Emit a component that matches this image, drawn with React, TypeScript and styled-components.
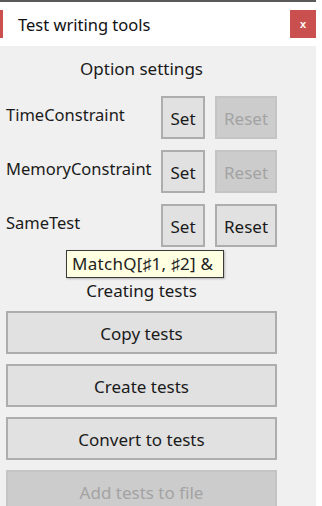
import React from 'react';
import styled, { createGlobalStyle } from 'styled-components';

const GlobalStyle = createGlobalStyle`
    html, body {
        margin: 0;
        padding: 0;
        background: #ffffff;
    }
    body {
        font-family: "Noto Sans", "Open Sans", "Liberation Sans", sans-serif;
        color: #1a1a1a;
    }
`;

const Window = styled.div`
    width: 316px;
    border-top: 2px solid #5a5a5a;
`;

const Header = styled.header`
    display: flex;
    align-items: center;
    height: 44px;
    background: #ffffff;
`;

const Accent = styled.span`
    width: 3px;
    height: 28px;
    background: #c9504f;
`;

const Title = styled.h1`
    margin: 0 0 0 15px;
    font-size: 16.5px;
    font-weight: 400;
    color: #111;
`;

const CloseButton = styled.button`
    margin-left: auto;
    width: 26px;
    height: 28px;
    border: none;
    padding: 0;
    background: #c9504f;
    color: #fff;
    font-family: "Liberation Sans", sans-serif;
    font-size: 11px;
    font-weight: 700;
    line-height: 28px;
`;

const Panel = styled.main`
    position: relative;
    height: 457px;
    overflow: hidden;
    padding: 11px 39px 0 6px;
    background: #f0f0f0;
`;

const SectionTitle = styled.h2<{ $top?: number; $bottom?: number }>`
    margin: ${(p) => p.$top || 0}px 0 ${(p) => p.$bottom || 0}px;
    font-size: 17px;
    font-weight: 400;
    line-height: 24px;
    text-align: center;
    color: #1a1a1a;
`;

const OptionList = styled.div`
    display: flex;
    flex-direction: column;
    gap: 11px;
`;

const OptionRow = styled.div`
    display: grid;
    grid-template-columns: minmax(0, 1fr) 44px 62px;
    align-items: center;
    column-gap: 10px;
    height: 43px;
`;

const OptionLabel = styled.span`
    padding-bottom: 6px;
    font-size: 16.5px;
    white-space: nowrap;
    color: #1a1a1a;
`;

const Button = styled.button`
    box-sizing: border-box;
    width: 100%;
    height: 43px;
    padding: 2px 0 0;
    border: 2px solid #adadad;
    background: #e1e1e1;
    font-family: inherit;
    font-size: 17px;
    color: #1a1a1a;
    &:disabled {
        border-color: #c4c4c4;
        background: #cccccc;
        color: #a3a3a3;
    }
`;

const ActionList = styled.div`
    display: flex;
    flex-direction: column;
    gap: 10px;
`;

const Tooltip = styled.div`
    position: absolute;
    left: 66px;
    top: 204px;
    box-sizing: border-box;
    width: 158px;
    height: 28px;
    padding: 0 5px;
    border: 1px solid #3a3a3a;
    background: #ffffe1;
    box-shadow: 1px 1px 2px rgba(0, 0, 0, 0.25);
    font-size: 17px;
    letter-spacing: 0.3px;
    line-height: 26px;
    color: #222;
    white-space: nowrap;
`;

const options = [
    { name: 'TimeConstraint', canReset: false },
    { name: 'MemoryConstraint', canReset: false },
    { name: 'SameTest', canReset: true },
];

const actions = [
    { name: 'Copy tests', enabled: true },
    { name: 'Create tests', enabled: true },
    { name: 'Convert to tests', enabled: true },
    { name: 'Add tests to file', enabled: false },
];

const App: React.FunctionComponent = (): JSX.Element => {
    return (
        <>
            <GlobalStyle />
            <Window>
                <Header>
                    <Accent />
                    <Title>Test writing tools</Title>
                    <CloseButton>x</CloseButton>
                </Header>
                <Panel>
                    <SectionTitle $bottom={15}>Option settings</SectionTitle>
                    <OptionList>
                        {options.map((o) => (
                            <OptionRow key={o.name}>
                                <OptionLabel>{o.name}</OptionLabel>
                                <Button>Set</Button>
                                <Button disabled={!o.canReset}>Reset</Button>
                            </OptionRow>
                        ))}
                    </OptionList>
                    <SectionTitle $top={32} $bottom={8}>
                        Creating tests
                    </SectionTitle>
                    <ActionList>
                        {actions.map((a) => (
                            <Button key={a.name} disabled={!a.enabled}>
                                {a.name}
                            </Button>
                        ))}
                    </ActionList>
                    <Tooltip>MatchQ[♯1, ♯2] &amp;</Tooltip>
                </Panel>
            </Window>
        </>
    );
};

export default App;
